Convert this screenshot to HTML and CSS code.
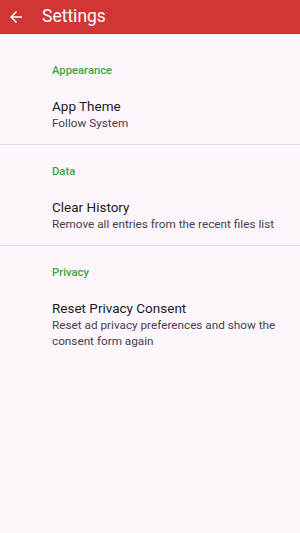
FILE: index.html
```html
<!DOCTYPE html>
<html>
<head>
<meta charset="utf-8">
<link rel="stylesheet" href="styles.css">
</head>
<body>
<header class="bar">
  <svg class="back" viewBox="0 0 24 24" width="18" height="18"><path d="M20 11H7.83l5.59-5.59L12 4l-8 8 8 8 1.41-1.41L7.83 13H20v-2z" fill="#fff"/></svg>
  <span class="title">Settings</span>
</header>
<main class="list">
  <section class="group">
    <div class="cat">Appearance</div>
    <div class="item">
      <div class="item-title">App Theme</div>
      <div class="item-sub">Follow System</div>
    </div>
  </section>
  <section class="group">
    <div class="cat">Data</div>
    <div class="item">
      <div class="item-title">Clear History</div>
      <div class="item-sub">Remove all entries from the recent files list</div>
    </div>
  </section>
  <section class="group last">
    <div class="cat">Privacy</div>
    <div class="item">
      <div class="item-title">Reset Privacy Consent</div>
      <div class="item-sub">Reset ad privacy preferences and show the consent form again</div>
    </div>
  </section>
</main>
</body>
</html>
```
FILE: styles.css
```css
html, body {
  margin: 0;
  padding: 0;
}
body {
  width: 300px;
  height: 533px;
  background: #fdf7fd;
  font-family: Roboto, "Noto Sans", sans-serif;
  overflow: hidden;
}
.bar {
  height: 33px;
  background: #d33434;
  border-bottom: 1px solid #e01e1e;
  display: flex;
  align-items: center;
  color: #fff;
}
.back {
  margin-left: 7px;
  width: 18px;
  height: 18px;
}
.title {
  margin-left: 17px;
  font-size: 17.5px;
  margin-top: -1px;
}
.list {
  padding-top: 9px;
}
.group {
  border-bottom: 1px solid #e2dae2;
  padding: 0 14px 0 52px;
}
.group + .group .cat {
  padding-top: 20px;
}
.group.last {
  border-bottom: none;
}
.cat {
  color: #3ba63b;
  font-size: 11.25px;
  font-weight: 500;
  padding-top: 21px;
  line-height: 14px;
}
.item {
  padding-top: 20px;
  padding-bottom: 13px;
}
.item-title {
  color: #1c1a1f;
  font-size: 13.5px;
  font-weight: 400;
  line-height: 17px;
}
.item-sub {
  color: #45404a;
  font-size: 11.75px;
  line-height: 16px;
}
```
